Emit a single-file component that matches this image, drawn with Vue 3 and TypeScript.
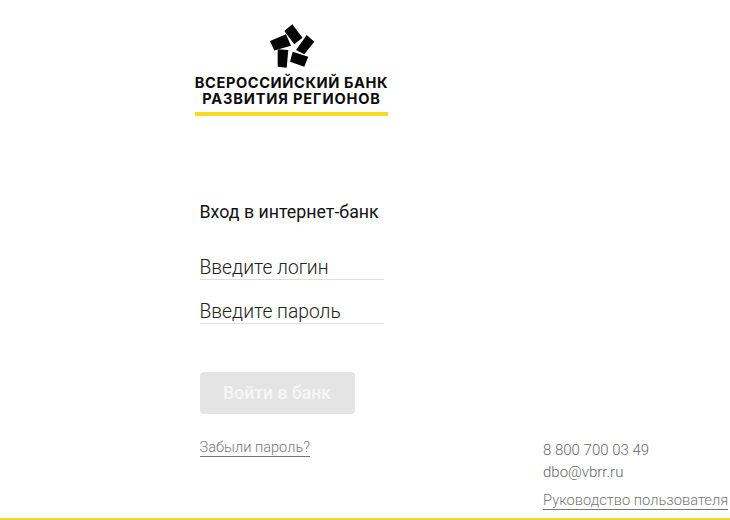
<script setup lang="ts">
const title: string = 'Вход в интернет-банк'
</script>

<template>
  <div class="page">
    <main class="main">
      <div class="logo">
        <svg class="mark" viewBox="0 0 60 55" width="60" height="55" aria-hidden="true">
          <polygon points="24.3,13 32.3,6.3 42.5,19.7 34.3,26.3" />
          <polygon points="36,32 46.7,17 54.3,23.7 44.3,36.3" />
          <polygon points="10,23 26,16.3 31,27.7 14.3,32.5" />
          <polygon points="17.7,31.3 28.3,32 26.7,49.7 17.7,48.7" />
          <polygon points="32.7,33.7 48.3,38.7 44.3,48.7 30,43.7" />
        </svg>
        <div class="logo-text">ВСЕРОССИЙСКИЙ БАНК</div>
        <div class="logo-text second">РАЗВИТИЯ РЕГИОНОВ</div>
        <div class="logo-line"></div>
      </div>
      <form class="form" @submit.prevent>
        <h1 class="title">{{ title }}</h1>
        <input class="field first" type="text" placeholder="Введите логин" />
        <input class="field" type="password" placeholder="Введите пароль" />
        <button class="submit" type="button" disabled>Войти в банк</button>
        <a class="link forgot" href="#">Забыли пароль?</a>
      </form>
    </main>
    <aside class="contacts">
      <div class="contact">8 800 700 03 49</div>
      <div class="contact mail">dbo@vbrr.ru</div>
      <a class="link guide" href="#">Руководство пользователя</a>
    </aside>
  </div>
</template>

<style scoped>
.page {
  box-sizing: border-box;
  width: 730px;
  height: 520px;
  display: flex;
  justify-content: space-between;
  padding-left: 195px;
  border-bottom: 2px solid #f0d92e;
  background: #fff;
  font-family: Roboto, "Noto Sans", sans-serif;
  overflow: hidden;
}
.main {
  width: 193px;
  display: flex;
  flex-direction: column;
}
.logo {
  display: flex;
  flex-direction: column;
  align-items: center;
  padding-top: 18px;
}
.mark { display: block; margin-left: -4px; }
.mark polygon { fill: #050505; }
.logo-text {
  font-family: Inter, "Liberation Sans", sans-serif;
  font-weight: 700;
  font-size: 14.6px;
  letter-spacing: 0.6px;
  line-height: 16px;
  color: #0a0a0a;
  white-space: nowrap;
  margin-top: 2px;
}
.logo-text.second { margin-top: 0; letter-spacing: 0.85px; }
.logo-line {
  width: 193px;
  height: 4px;
  margin-top: 5px;
  background: #f5dc1f;
}
.form {
  display: flex;
  flex-direction: column;
  align-items: flex-start;
  padding: 0 4.5px;
  margin-top: 84px;
}
.title {
  margin: 0;
  font-size: 17.8px;
  font-weight: 400;
  line-height: 24px;
  color: #111;
  white-space: nowrap;
}
.field {
  box-sizing: border-box;
  width: 184.5px;
  height: 32px;
  padding: 8px 0 0;
  border: 0;
  border-bottom: 1px solid #dedede;
  outline: 0;
  background: transparent;
  font: 300 19.3px/24px Roboto, sans-serif;
  color: #222;
  margin-top: 12px;
}
.field.first { margin-top: 24px; }
.field::placeholder { color: #222; opacity: 1; }
.submit {
  width: 155px;
  height: 42px;
  margin-top: 48px;
  border: 0;
  border-radius: 4px;
  background: #e4e4e4;
  color: #f6f6f6;
  font: 500 17.6px Roboto, sans-serif;
}
.link {
  color: #777;
  text-decoration: none;
  border-bottom: 1px solid #777;
  font-weight: 300;
  white-space: nowrap;
}
.forgot {
  margin-top: 24px;
  font-size: 14.6px;
  line-height: 18px;
}
.contacts {
  width: 187px;
  display: flex;
  flex-direction: column;
  align-items: flex-start;
  padding-top: 439px;
}
.contact {
  font-size: 15px;
  font-weight: 300;
  line-height: 22px;
  color: #666;
}
.guide {
  margin-top: 8px;
  font-size: 14.7px;
  line-height: 18px;
}
</style>
